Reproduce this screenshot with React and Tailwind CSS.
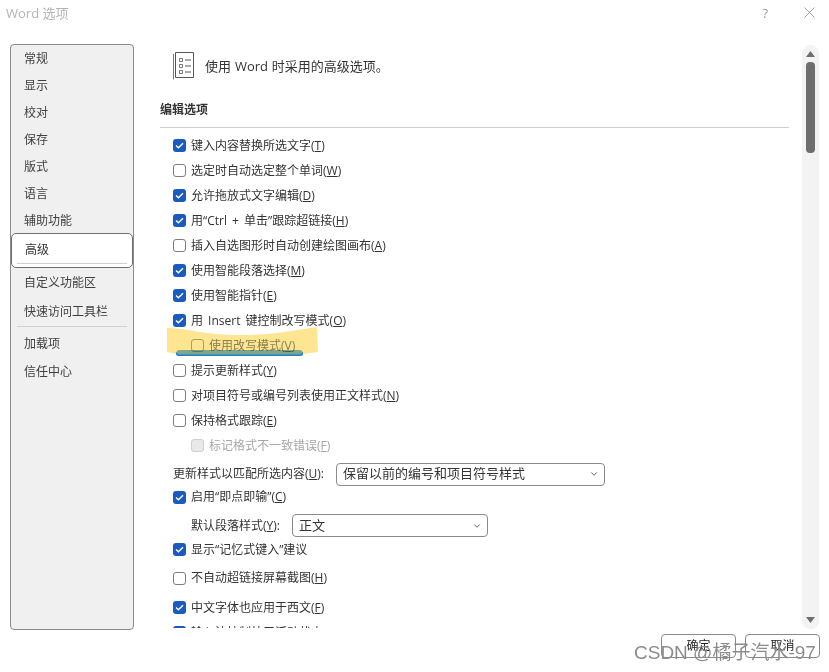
import { ChevronDown } from "lucide-react";

const sideTop = ["常规", "显示", "校对", "保存", "版式", "语言", "辅助功能"];

const topRows = [
  { on: true, text: "键入内容替换所选文字", key: "T" },
  { on: false, text: "选定时自动选定整个单词", key: "W" },
  { on: true, text: "允许拖放式文字编辑", key: "D" },
  { on: true, text: "用“Ctrl + 单击”跟踪超链接", key: "H" },
  { on: false, text: "插入自选图形时自动创建绘图画布", key: "A" },
  { on: true, text: "使用智能段落选择", key: "M" },
  { on: true, text: "使用智能指针", key: "E" },
  { on: true, text: "用 Insert 键控制改写模式", key: "O" },
  { on: false, text: "使用改写模式", key: "V", sub: true, dim: true },
  { on: false, text: "提示更新样式", key: "Y" },
  { on: false, text: "对项目符号或编号列表使用正文样式", key: "N" },
  { on: false, text: "保持格式跟踪", key: "E" },
  { on: false, text: "标记格式不一致错误", key: "F", sub: true, disabled: true },
];

function Check({ on, disabled, dim }) {
  if (on) {
    return (
      <span className="w-[13px] h-[13px] shrink-0 rounded-[3px] bg-[#1a5bbf] flex items-center justify-center">
        <svg width="9" height="7" viewBox="0 0 9 7" fill="none">
          <path d="M1 3.6 L3.4 5.8 L8 1.2" stroke="white" strokeWidth="1.4" />
        </svg>
      </span>
    );
  }
  return (
    <span
      className={`w-[13px] h-[13px] shrink-0 rounded-[3px] border ${
        disabled ? "bg-[#e9e9e9] border-[#cfcfcf]" : dim ? "border-[#b0b0b0]" : "bg-white border-[#7d7d7d]"
      }`}
    />
  );
}

function Label({ text, k, disabled, dim, colon }) {
  return (
    <span className={`whitespace-pre [word-spacing:2px] ${disabled ? "text-[#a6a6a6]" : dim ? "text-[#8c8c8c]" : "text-[#333333]"}`}>
      {text}
      {k && (
        <>
          (<u>{k}</u>)
        </>
      )}
      {colon && ":"}
    </span>
  );
}

function Row({ on, text, k, sub, disabled, dim, h = "h-[25px]" }) {
  return (
    <div className={`flex items-center gap-[5px] ${h} ${sub ? "pl-[31px]" : "pl-[13px]"}`}>
      <Check on={on} disabled={disabled} dim={dim} />
      <Label text={text} k={k} disabled={disabled} dim={dim} />
    </div>
  );
}

function Select({ value, w }) {
  return (
    <div className={`${w} h-[23px] rounded-[4px] border border-[#8a8a8a] flex items-center justify-between pl-[6px] pr-[5px] text-[13px] text-[#333333]`}>
      <span>{value}</span>
      <ChevronDown size={10} strokeWidth={2} className="text-[#444444]" />
    </div>
  );
}

function SideItem({ label, h = "h-[27px]", pt = "" }) {
  return <div className={`${h} ${pt} shrink-0 flex items-center pl-[13px] text-[#404040]`}>{label}</div>;
}

export default function App() {
  return (
    <div className="relative w-[829px] h-[672px] overflow-hidden bg-white text-[12px] [font-family:'Open_Sans','Noto_Sans_CJK_SC',sans-serif]">
      {/* title bar */}
      <div className="h-[44px] flex items-start justify-between pl-[6px] pr-[14px] pt-[4px] text-[#b4b4b4]">
        <span className="text-[13px] leading-[18px]">Word 选项</span>
        <div className="flex items-start gap-[36px]">
          <span className="text-[13px] leading-[18px] text-[#9a9a9a]">?</span>
          <svg width="11" height="11" viewBox="0 0 11 11" className="mt-[3px]" fill="none">
            <path d="M0.5 0.5 L10.5 10.5 M10.5 0.5 L0.5 10.5" stroke="#8f8f8f" strokeWidth="0.8" />
          </svg>
        </div>
      </div>

      <div className="flex h-[586px] pl-[10px]">
        {/* left nav */}
        <div className="w-[124px] shrink-0 rounded-[4px] border border-[#8a8a8a] bg-[#f0f0f0] flex flex-col">
          {sideTop.map((s) => (
            <SideItem key={s} label={s} />
          ))}
          <div className="relative h-[35px] shrink-0 -mt-[1px] flex items-center pl-[13px] bg-white rounded-[5px] border border-[#6e6e6e] text-[#333333] pb-[1px]">
            高级
            <div className="absolute left-[5px] right-[5px] bottom-[3px] h-px bg-[#cfcfcf]" />
          </div>
          <SideItem label="自定义功能区" pt="pt-[2px]" />
          <SideItem label="快速访问工具栏" h="h-[31px]" pt="pt-[2px]" />
          <div className="mx-[6px] h-px bg-[#d2d2d2] shrink-0" />
          <SideItem label="加载项" h="h-[30px]" pt="pt-[3px]" />
          <SideItem label="信任中心" pt="pt-[2px]" />
        </div>

        {/* content */}
        <div className="w-[629px] ml-[26px] h-[584px] overflow-hidden shrink-0">
          <div className="h-[44px] flex items-center pl-[13px] gap-[11px]">
            <svg width="21" height="28" viewBox="0 0 21 28" fill="none" stroke="#555555" strokeWidth="1">
              <path d="M0.5 2 V27.5" stroke="#777777" />
              <path d="M2.5 0.5 H20.5 V25.5 H2.5 Z" />
              <path d="M6.5 6.5 H9.5 V9.5 H6.5 Z M6.5 12.5 H9.5 V15.5 H6.5 Z M6.5 18.5 H9.5 V21.5 H6.5 Z" stroke="#777777" />
              <path d="M12 8 H18 M12 14 H18 M12 20 H18" />
            </svg>
            <span className="text-[13px] text-[#333333] pt-[2px] [word-spacing:0.5px]">使用 Word 时采用的高级选项。</span>
          </div>
          <div className="mt-[11px] h-[22px] flex items-center font-bold text-[#333333]">编辑选项</div>
          <div className="mt-[6px] h-px bg-[#cfcfcf]" />
          <div className="pt-[5px] flex flex-col">
            {topRows.map((r) => (
              <Row key={r.text} on={r.on} text={r.text} k={r.key} sub={r.sub} disabled={r.disabled} dim={r.dim} />
            ))}
            <div className="mt-[3px] h-[26px] flex items-center pl-[13px] gap-[12px]">
              <Label text="更新样式以匹配所选内容" k="U" colon />
              <Select value="保留以前的编号和项目符号样式" w="w-[269px]" />
            </div>
            <Row on text="启用“即点即输”" k="C" h="h-[20px]" />
            <div className="mt-[3px] h-[31px] flex items-center pl-[31px] gap-[12px]">
              <Label text="默认段落样式" k="Y" colon />
              <Select value="正文" w="w-[196px]" />
            </div>
            <Row on text="显示“记忆式键入”建议" h="h-[17px]" />
            <Row text="不自动超链接屏幕截图" k="H" h="h-[40px]" />
            <Row on text="中文字体也应用于西文" k="F" h="h-[19px]" />
            <Row on text="输入法控制处于活动状态" k="A" h="h-[31px]" />
          </div>
        </div>

        {/* scrollbar */}
        <div className="w-[17px] ml-[13px] h-[584px] mt-px shrink-0 rounded-[8px] bg-[#f3f3f3] flex flex-col items-center pt-[6px] pb-[6px]">
          <svg width="9" height="6" viewBox="0 0 9 6"><path d="M4.5 0 L9 6 H0 Z" fill="#6e6e6e" /></svg>
          <div className="mt-[5px] w-[9px] h-[91px] rounded-[4px] bg-[#6e6e6e]" />
          <div className="flex-1" />
          <svg width="9" height="6" viewBox="0 0 9 6"><path d="M0 0 H9 L4.5 6 Z" fill="#6e6e6e" /></svg>
        </div>
      </div>

      {/* buttons */}
      <div className="flex justify-end gap-[9px] pr-[9px] pt-[4px] text-[#222222]">
        <div className="w-[75px] h-[24px] rounded-[4px] border border-[#8a8a8a] flex items-center justify-center">确定</div>
        <div className="w-[75px] h-[24px] rounded-[4px] border border-[#8a8a8a] flex items-center justify-center">取消</div>
      </div>

      {/* hand drawn marker over the screenshot */}
      <svg className="absolute left-[165px] top-[325px] mix-blend-multiply" width="156" height="33" viewBox="0 0 156 33" fill="none">
        <path d="M2 3 C 20 3 40 10 75 10 C 110 10 130 5 152 2 L 153 27 L 138 29 L 11 29 L 2 27 Z" fill="#fde591" />
        <rect x="11" y="26" width="127" height="5" rx="2.5" fill="#1f7fd0" />
        <rect x="12" y="25" width="125" height="4.5" rx="2" fill="#7fa688" />
      </svg>

      {/* watermark */}
      <div className="absolute left-[634px] top-[642px] text-[19px] leading-[22px] whitespace-nowrap text-[#8c8c8c] [font-family:'Liberation_Sans','Noto_Sans_CJK_SC',sans-serif]">
        CSDN @橘子汽水-97
      </div>
    </div>
  );
}
